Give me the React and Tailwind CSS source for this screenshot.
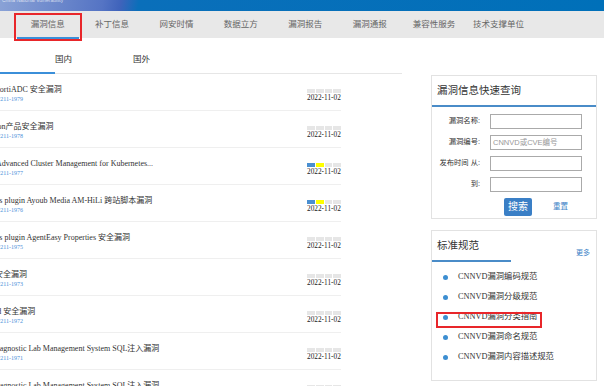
import React from "react";

const navs = ["漏洞信息", "补丁信息", "网安时情", "数据立方", "漏洞报告", "漏洞通报", "兼容性服务", "技术支撑单位"];

const rows = [
  { title: "Fortinet FortiADC 安全漏洞", id: "CNNVD-202211-1979", lv: 0 },
  { title: "EMC Isilon产品安全漏洞", id: "CNNVD-202211-1978", lv: 0 },
  { title: "Red Hat Advanced Cluster Management for Kubernetes...", id: "CNNVD-202211-1977", lv: 2 },
  { title: "WordPress plugin Ayoub Media AM-HiLi 跨站脚本漏洞", id: "CNNVD-202211-1976", lv: 2 },
  { title: "WordPress plugin AgentEasy Properties 安全漏洞", id: "CNNVD-202211-1975", lv: 0 },
  { title: "Moodle 安全漏洞", id: "CNNVD-202211-1973", lv: 0 },
  { title: "Nextcloud 安全漏洞", id: "CNNVD-202211-1972", lv: 0 },
  { title: "Online Diagnostic Lab Management System SQL注入漏洞", id: "CNNVD-202211-1971", lv: 0 },
  { title: "Online Diagnostic Lab Management System SQL注入漏洞", id: "CNNVD-202211-1970", lv: 0 },
];

const specs = ["CNNVD漏洞编码规范", "CNNVD漏洞分级规范", "CNNVD漏洞分类指南", "CNNVD漏洞命名规范", "CNNVD漏洞内容描述规范"];

const sans = "font-['Liberation_Sans','Noto_Sans_CJK_SC',sans-serif]";
const serif = "font-['Liberation_Serif','Noto_Sans_CJK_SC',serif]";

const Level = ({ lv }) => (
  <div className="flex gap-[1px]">
    {[0, 1, 2, 3].map((i) => (
      <span
        key={i}
        className={
          "w-[7.75px] h-[3.5px] " +
          (i === 0 && lv >= 1 ? "bg-[#4a8fd1]" : i === 1 && lv >= 2 ? "bg-[#ffff00]" : "bg-[#e6e6e6]")
        }
      />
    ))}
  </div>
);

export default function App() {
  return (
    <div className={"relative w-[604px] h-[386px] overflow-hidden bg-white " + sans}>
      {/* banner */}
      <div className="h-[11px] overflow-hidden bg-[linear-gradient(100deg,#8aa2d6_0%,#5574c4_17%,#3f63bb_20%,#0a6fba_23%,#0070b9_100%)]">
        <div className="-mt-[3px] pl-[2px] text-[5px] text-white/70 leading-[6px]">China National Vulnerability</div>
      </div>

      {/* nav */}
      <div className="h-[27px] bg-[#e8e8e8] flex pl-[15.5px]">
        {navs.map((n, i) => (
          <div key={n} className="relative w-[64.4px] flex items-center justify-center text-[8.5px] text-[#666]">
            {n}
            {i === 0 && <span className="absolute left-[1px] right-[1px] bottom-[-1px] h-[2px] bg-[#3b8fd9]" />}
          </div>
        ))}
      </div>

      <div className="flex">
        {/* left column */}
        <div className="w-[402px] overflow-hidden">
          <div className="relative h-[36px] border-b border-[#e6e6e6] flex pl-[55px] pt-[16px] text-[8.5px] leading-[10px] text-[#333]">
            <span>国内</span>
            <span className="ml-[61px]">国外</span>
            <span className="absolute left-0 bottom-[-1px] w-[55px] h-[2px] bg-[#3b8fd9]" />
          </div>
          <div className="-ml-[32px] w-[373px]">
            {rows.map((r, i) => (
              <div key={i} className="h-[37px] border-b border-[#efefef] flex justify-between">
                <div className={"pt-[11px] whitespace-nowrap " + serif}>
                  <div className="text-[8px] leading-[10px] text-[#333]">{r.title}</div>
                  <div className="text-[6px] leading-[9px] text-[#4a90d9]">{r.id}</div>
                </div>
                <div className="pt-[15px] w-[34px]">
                  <Level lv={r.lv} />
                  <div className={"mt-[1px] text-[7.3px] leading-[8px] text-[#222] whitespace-nowrap " + serif}>2022-11-02</div>
                </div>
              </div>
            ))}
          </div>
        </div>

        {/* right column */}
        <div className="ml-[29px] w-[166px]">
          <div className="mt-[37px] border border-[#e2e2e2] pb-[2px]">
            <div className="h-[31px] flex items-center pl-[5px] text-[10.5px] text-[#333] border-b-2 border-[#4a8cc8]">
              漏洞信息快速查询
            </div>
            <div className="mt-[7px] flex flex-col gap-[6px] text-[7.3px] text-[#333]">
              {["漏洞名称:", "漏洞编号:", "发布时间 从:", "到:"].map((l, i) => (
                <div key={l} className="flex items-center h-[15px]">
                  <span className="w-[48px] text-right whitespace-nowrap">{l}</span>
                  <div className="ml-[10px] w-[92px] h-[15px] border border-[#aaa] flex items-center pl-[2px] text-[#999] text-[7.5px]">
                    {i === 1 ? "CNNVD或CVE编号" : ""}
                  </div>
                </div>
              ))}
            </div>
            <div className="mt-[6px] flex items-center pl-[72px]">
              <button className="w-[28px] h-[18px] bg-[#3a7fc6] rounded-[2px] text-[10px] text-white leading-none">搜索</button>
              <span className="ml-[21px] text-[7.5px] text-[#3a7fc6]">重置</span>
            </div>
          </div>

          <div className="mt-[11px] h-[151px] border border-[#e2e2e2]">
            <div className="h-[31px] flex justify-between items-end">
              <div className="w-[79px] h-full flex items-center pl-[5px] text-[10.5px] text-[#333] border-b-2 border-[#4a8cc8]">
                标准规范
              </div>
              <span className="pb-[5px] pr-[6px] text-[7px] leading-[8px] text-[#3a7fc6]">更多</span>
            </div>
            <div className="mt-[5px]">
              {specs.map((s) => (
                <div key={s} className="h-[20px] flex items-center pl-[11px]">
                  <span className="w-[5px] h-[5px] rounded-full bg-[#3d8ed1]" />
                  <span className={"ml-[10px] text-[8.3px] text-[#333] " + serif}>{s}</span>
                </div>
              ))}
            </div>
          </div>
        </div>
      </div>

      {/* annotation boxes */}
      <div className="absolute left-[14px] top-[13px] w-[68px] h-[28px] border-2 border-[#e8262a]" />
      <div className="absolute left-[436px] top-[312px] w-[106px] h-[16px] border-2 border-[#e8262a]" />
    </div>
  );
}
